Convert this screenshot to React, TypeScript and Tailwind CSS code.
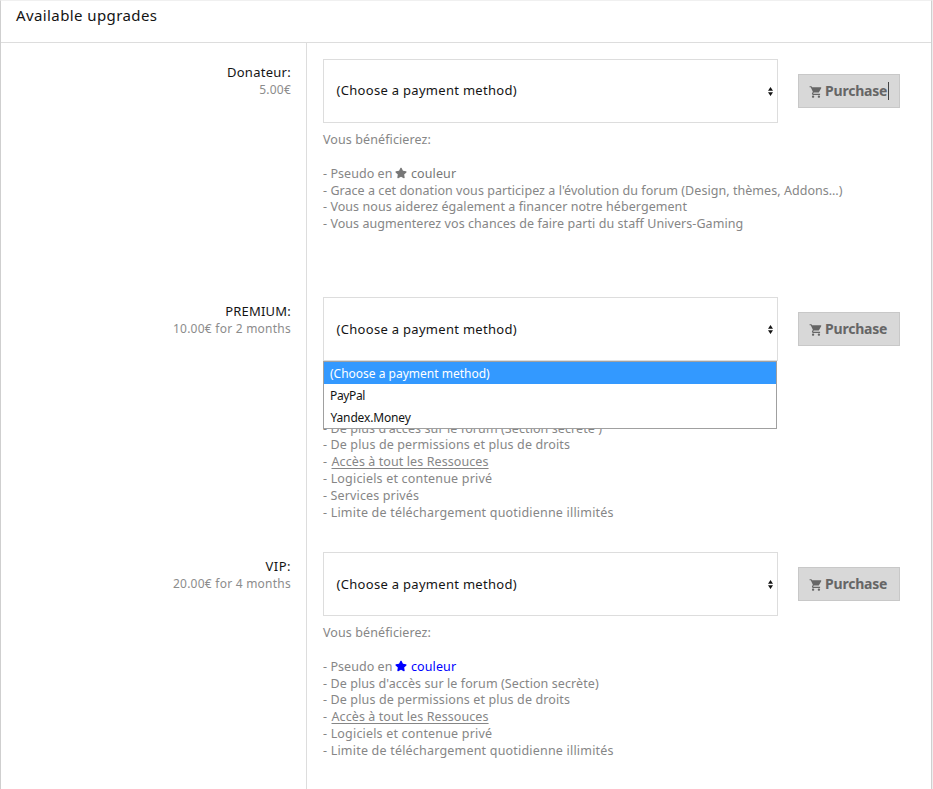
import React from 'react';
import { FaStar } from 'react-icons/fa';
import { MdShoppingCart } from 'react-icons/md';

interface Line {
  text: string;
  spacing: string;
  kind?: 'link' | 'star' | 'blueStar';
}

interface Upgrade {
  name: string;
  nameSpacing: string;
  price: string;
  height: string;
  labelTop: string;
  selectTop: string;
  lines: Line[];
  open?: boolean;
  focused?: boolean;
}

const intro: Line = { text: 'Vous bénéficierez:', spacing: 'tracking-[0.1px]' };
const blank: Line = { text: '', spacing: '' };
const permissions: Line = { text: '- De plus de permissions et plus de droits', spacing: 'tracking-[0.13px]' };
const resources: Line = { text: 'Accès à tout les Ressouces', spacing: 'tracking-[0.09px]', kind: 'link' };
const software: Line = { text: '- Logiciels et contenue privé', spacing: 'tracking-[0.18px]' };
const downloads: Line = { text: '- Limite de téléchargement quotidienne illimités', spacing: 'tracking-[0.2px]' };

const upgrades: Upgrade[] = [
  {
    name: 'Donateur:',
    nameSpacing: 'tracking-[0.27px]',
    price: '5.00€',
    height: 'h-[238px]',
    labelTop: 'pt-[20px]',
    selectTop: 'pt-0',
    focused: true,
    lines: [
      intro,
      blank,
      { text: 'couleur', spacing: 'tracking-[0.1px]', kind: 'star' },
      { text: "- Grace a cet donation vous participez a l'évolution du forum (Design, thèmes, Addons…)", spacing: 'tracking-[0.05px]' },
      { text: '- Vous nous aiderez également a financer notre hébergement', spacing: 'tracking-[0.06px]' },
      { text: '- Vous augmenterez vos chances de faire parti du staff Univers-Gaming', spacing: 'tracking-[0.06px]' },
    ],
  },
  {
    name: 'PREMIUM:',
    nameSpacing: 'tracking-[0.2px]',
    price: '10.00€ for 2 months',
    height: 'h-[255px]',
    labelTop: 'pt-[21px]',
    selectTop: 'pt-[2px]',
    open: true,
    lines: [
      blank,
      blank,
      blank,
      { text: "- De plus d'accès sur le forum (Section secrète )", spacing: 'tracking-[0.09px]' },
      permissions,
      resources,
      software,
      { text: '- Services privés', spacing: 'tracking-[0.14px]' },
      downloads,
    ],
  },
  {
    name: 'VIP:',
    nameSpacing: 'tracking-[0.5px]',
    price: '20.00€ for 4 months',
    height: 'h-[253px]',
    labelTop: 'pt-[21px]',
    selectTop: 'pt-[2px]',
    lines: [
      intro,
      blank,
      { text: 'couleur', spacing: 'tracking-[0.1px]', kind: 'blueStar' },
      { text: "- De plus d'accès sur le forum (Section secrète)", spacing: 'tracking-[0.09px]' },
      permissions,
      resources,
      software,
      downloads,
    ],
  },
];

const DescriptionLine: React.FC<{ line: Line }> = ({ line }) => {
  if (line.kind === 'link') {
    return (
      <div className="flex h-[16.87px]">
        <span className="w-[8.5px]">-</span>
        <span className={`underline underline-offset-2 ${line.spacing}`}>{line.text}</span>
      </div>
    );
  }
  if (line.kind) {
    const blue = line.kind === 'blueStar';
    return (
      <div className="flex h-[16.87px]">
        <span className="w-[72px] tracking-[0.05px]">- Pseudo en</span>
        <span className={`flex ${blue ? 'text-[#0000ff]' : 'text-[#777777]'}`}>
          <FaStar className="mt-[1px] mr-[4px] h-[12px] w-[12px]" />
          <span className={line.spacing}>{line.text}</span>
        </span>
      </div>
    );
  }
  return <div className={`h-[16.87px] ${line.spacing}`}>{line.text}</div>;
};

const SelectBox: React.FC<{ upgrade: Upgrade }> = ({ upgrade }) => (
  <div className="relative flex h-[64px] w-[455px] items-center justify-between border border-[#dddddd] pr-[4px] pl-[12.5px] text-[13px] text-[#141414]">
    <span className={`tracking-[0.3px] ${upgrade.selectTop}`}>(Choose a payment method)</span>
    <svg width="5" height="9" viewBox="0 0 5 9" fill="#141414">
      <path d="M2.5 0 L5 3.7 H0 Z M0 5.3 H5 L2.5 9 Z" />
    </svg>
    {upgrade.open && (
      <ul className="absolute top-[63px] -left-px z-10 w-[454px] border border-[#a0a0a0] bg-white text-[12px] leading-[24px]">
        <li className="h-[22px] bg-[#3399ff] pl-[6px] text-white">(Choose a payment method)</li>
        <li className="h-[22px] pl-[6px] tracking-[-0.35px]">PayPal</li>
        <li className="h-[22px] pl-[6.5px] tracking-[-0.15px]">Yandex.Money</li>
      </ul>
    )}
  </div>
);

const UpgradeRow: React.FC<{ upgrade: Upgrade }> = ({ upgrade }) => (
  <div className={`flex ${upgrade.height}`}>
    <div className={`w-[306px] shrink-0 border-r border-[#dddddd] pr-[15px] text-right ${upgrade.labelTop}`}>
      <div className={`text-[13px] leading-[18px] text-[#141414] ${upgrade.nameSpacing}`}>{upgrade.name}</div>
      <div className="text-[12px] leading-[18px] tracking-[0.24px] text-[#8c8c8c]">{upgrade.price}</div>
    </div>
    <div className="pt-[16px] pl-[16px]">
      <div className="flex items-center gap-[20px]">
        <SelectBox upgrade={upgrade} />
        <button className="flex h-[34px] w-[102px] items-center border border-[#c8c8c8] bg-[#d8d8d8] pl-[10px] text-[14px] font-bold text-[#666666]">
          <MdShoppingCart className="mt-px mr-[2px] h-[14px] w-[14px]" />
          <span className="pb-[2px] tracking-[-0.2px]">Purchase</span>
          {upgrade.focused && <span className="ml-px h-[18px] w-px bg-[#444444]" />}
        </button>
      </div>
      <div className="pt-[9px] text-[12.5px] leading-[16.87px] whitespace-nowrap text-[#868686]">
        {upgrade.lines.map((line, index) => (
          <DescriptionLine key={index} line={line} />
        ))}
      </div>
    </div>
  </div>
);

export default function App() {
  return (
    <div className="flex h-[789px] w-[933px] overflow-hidden bg-[#eeeeee] font-['Noto_Sans',sans-serif]">
      <div className="w-[932px] border-t border-r border-l border-t-[#f0f0f0] border-r-[#cfcfcf] border-l-[#cfcfcf] bg-white">
        <h2 className="h-[42px] border-b border-[#dddddd] pt-[3px] pl-[15px] text-[15px] leading-[22px] tracking-[0.4px] text-[#141414]">
          Available upgrades
        </h2>
        {upgrades.map((upgrade) => (
          <UpgradeRow key={upgrade.name} upgrade={upgrade} />
        ))}
      </div>
    </div>
  );
}
